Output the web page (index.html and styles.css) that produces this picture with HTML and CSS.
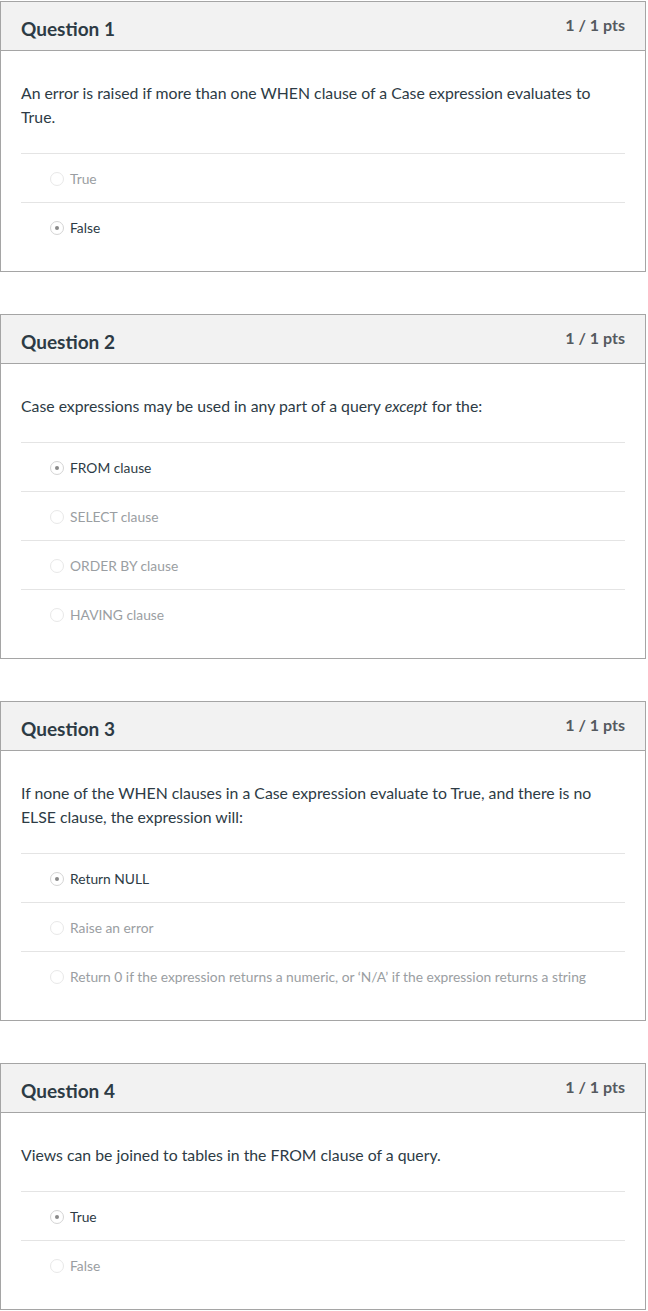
FILE: index.html
```html
<!DOCTYPE html>
<html>
<head>
<meta charset="utf-8">
<link rel="stylesheet" href="styles.css">
</head>
<body>
<div class="quiz">
  <section class="card">
    <header class="card-head"><h2 class="title">Question 1</h2><span class="pts">1 / 1 pts</span></header>
    <div class="card-body">
      <p class="question">An error is raised if more than one WHEN clause of a Case expression evaluates to True.</p>
      <ul class="answers">
        <li class="answer"><span class="radio"></span>True</li>
        <li class="answer selected"><span class="radio"></span>False</li>
      </ul>
    </div>
  </section>
  <section class="card">
    <header class="card-head"><h2 class="title">Question 2</h2><span class="pts">1 / 1 pts</span></header>
    <div class="card-body">
      <p class="question">Case expressions may be used in any part of a query <em>except</em> for the:</p>
      <ul class="answers">
        <li class="answer selected"><span class="radio"></span>FROM clause</li>
        <li class="answer"><span class="radio"></span>SELECT clause</li>
        <li class="answer"><span class="radio"></span>ORDER BY clause</li>
        <li class="answer"><span class="radio"></span>HAVING clause</li>
      </ul>
    </div>
  </section>
  <section class="card">
    <header class="card-head"><h2 class="title">Question 3</h2><span class="pts">1 / 1 pts</span></header>
    <div class="card-body">
      <p class="question">If none of the WHEN clauses in a Case expression evaluate to True, and there is no ELSE clause, the expression will:</p>
      <ul class="answers">
        <li class="answer selected"><span class="radio"></span>Return NULL</li>
        <li class="answer"><span class="radio"></span>Raise an error</li>
        <li class="answer"><span class="radio"></span>Return 0 if the expression returns a numeric, or ‘N/A’ if the expression returns a string</li>
      </ul>
    </div>
  </section>
  <section class="card">
    <header class="card-head"><h2 class="title">Question 4</h2><span class="pts">1 / 1 pts</span></header>
    <div class="card-body">
      <p class="question">Views can be joined to tables in the FROM clause of a query.</p>
      <ul class="answers">
        <li class="answer selected"><span class="radio"></span>True</li>
        <li class="answer"><span class="radio"></span>False</li>
      </ul>
    </div>
  </section>
</div>
</body>
</html>
```
FILE: styles.css
```css
html, body {
  margin: 0;
  padding: 0;
  background: #fff;
}
body {
  font-family: Lato, "Open Sans", sans-serif;
  color: #2d3b45;
}
.quiz {
  padding-top: 1px;
  width: 646px;
  display: flex;
  flex-direction: column;
  gap: 42px;
}
.card {
  border: 1px solid #a5a5a5;
  background: #fff;
}
.card-head {
  display: flex;
  justify-content: space-between;
  align-items: flex-start;
  height: 49px;
  box-sizing: border-box;
  padding: 0 20px 0 20px;
  background: #f2f2f2;
  border-bottom: 1px solid #a5a5a5;
}
.title {
  margin: 0;
  padding-top: 15px;
  font-size: 19px;
  line-height: 24px;
  font-weight: 700;
  color: #2d3b45;
}
.pts {
  padding-top: 11px;
  font-size: 16px;
  line-height: 24px;
  font-weight: 700;
  color: #555a5f;
}
.card-body {
  padding: 30px 20px 20px 20px;
}
.question {
  margin: 0 0 24px 0;
  font-size: 15.8px;
  line-height: 24px;
}
.answers {
  list-style: none;
  margin: 0;
  padding: 0;
}
.answer {
  display: flex;
  align-items: center;
  border-top: 1px solid #e4e4e4;
  padding: 13px 0 11px 29px;
  font-size: 13.8px;
  line-height: 24px;
  color: #9a9ea2;
}
.answer.selected {
  color: #2d3b45;
}
.radio {
  width: 12px;
  height: 12px;
  border: 1px solid #e8e8e8;
  border-radius: 50%;
  margin-right: 6px;
  flex: none;
  position: relative;
  box-sizing: content-box;
}
.selected .radio {
  border-color: #d4d4d4;
}
.selected .radio::after {
  content: "";
  position: absolute;
  left: 4px;
  top: 4px;
  width: 4px;
  height: 4px;
  border-radius: 50%;
  background: #8a8a8a;
}
```
